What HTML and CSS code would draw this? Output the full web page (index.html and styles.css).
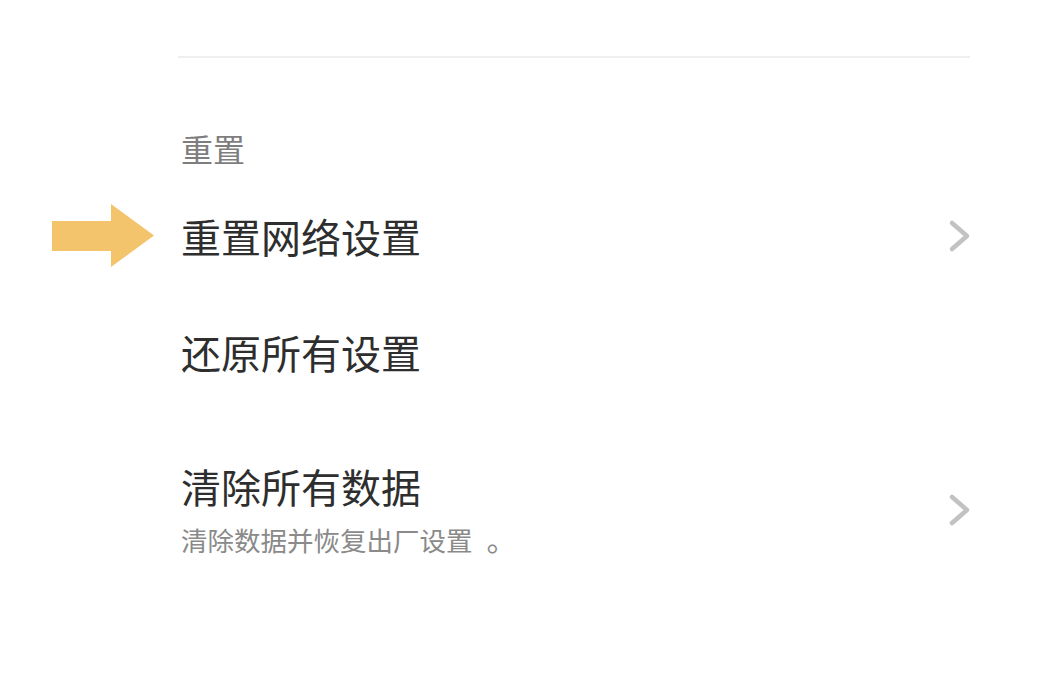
FILE: index.html
```html
<!DOCTYPE html>
<html lang="zh-CN">
<head>
<meta charset="utf-8">
<title>重置</title>
<link rel="stylesheet" href="styles.css">
</head>
<body>
<div class="page">
  <div class="divider"></div>
  <div class="section-title">重置</div>
  <div class="list">
    <div class="row">
      <div class="row-text"><div class="row-title">重置网络设置</div></div>
      <svg class="chevron" viewBox="0 0 24 34" width="24" height="34"><polyline points="4,4 19,17 4,30"/></svg>
    </div>
    <div class="row">
      <div class="row-text"><div class="row-title">还原所有设置</div></div>
    </div>
    <div class="row row-tall">
      <div class="row-text">
        <div class="row-title">清除所有数据</div>
        <div class="row-sub">清除数据并恢复出厂设置<span class="punct">。</span></div>
      </div>
      <svg class="chevron" viewBox="0 0 24 34" width="24" height="34"><polyline points="4,4 19,17 4,30"/></svg>
    </div>
  </div>
</div>
<svg class="arrow" viewBox="0 0 1040 694" width="1040" height="694"><polygon points="52,221 111,221 111,204 154,235.5 111,267 111,251 52,251"/></svg>
</body>
</html>
```
FILE: styles.css
```css
html, body {
  margin: 0;
  padding: 0;
  background: #ffffff;
}
body {
  font-family: "Noto Sans CJK SC", "Noto Sans", sans-serif;
  width: 1040px;
  height: 694px;
  overflow: hidden;
  position: relative;
}
.page {
  padding: 0 70px 0 178px;
}
.divider {
  margin-top: 56px;
  height: 2px;
  background: #efefef;
}
.section-title {
  margin-top: 74px;
  padding-left: 3px;
  font-size: 32px;
  line-height: 32px;
  color: #7e7e7e;
}
.list {
  margin-top: 14px;
}
.row {
  min-height: 116px;
  display: flex;
  align-items: center;
  justify-content: space-between;
  padding-left: 3px;
  box-sizing: border-box;
}
.row-tall {
  padding-top: 56px;
  padding-bottom: 56px;
}
.row-text {
  display: flex;
  flex-direction: column;
  gap: 19px;
}
.row-title {
  font-size: 40px;
  line-height: 40px;
  color: #2e2e2e;
}
.row-sub {
  font-size: 26.5px;
  line-height: 27px;
  color: #8a8a8a;
}
.punct {
  display: inline-block;
  margin-left: 14px;
  font-size: 30px;
}
.chevron {
  display: block;
  margin-right: -2px;
  fill: none;
  stroke: #c2c2c2;
  stroke-width: 4.5;
  stroke-linecap: round;
  stroke-linejoin: round;
}
.arrow {
  position: absolute;
  left: 0;
  top: 0;
  fill: #f3c46c;
  pointer-events: none;
}
```
